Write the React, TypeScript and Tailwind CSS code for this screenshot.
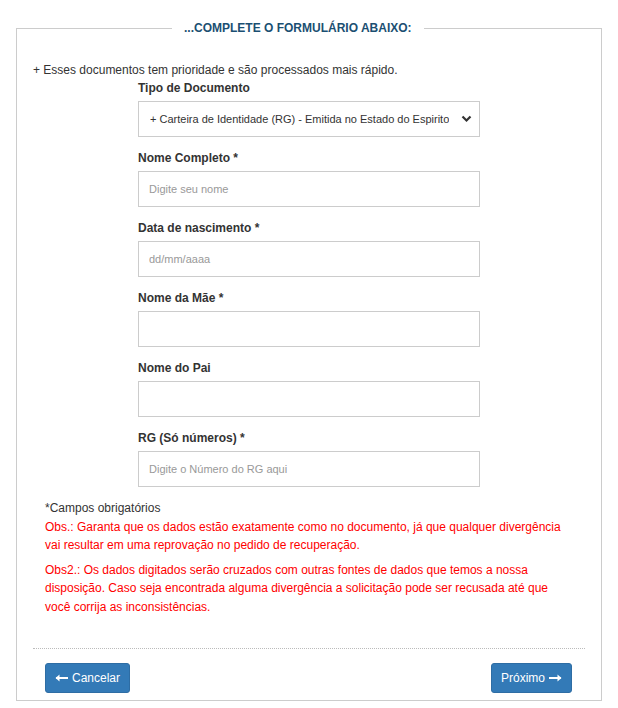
import React from 'react';

const font = { fontFamily: '"Liberation Sans", Arial, sans-serif' };

function Field({ label, children }: { label: string; children: React.ReactNode }) {
  return (
    <div className="mb-[12px]">
      <label className="block mb-[4px] text-[12px] leading-[18px] font-bold text-[#333]">{label}</label>
      {children}
    </div>
  );
}

function TextInput({ placeholder }: { placeholder?: string }) {
  return (
    <input
      type="text"
      placeholder={placeholder}
      className="block w-full h-[36px] px-[10px] border border-[#ccc] bg-white text-[11px] text-[#555] placeholder:text-[#999] outline-none"
      style={font}
    />
  );
}

export default function App() {
  return (
    <div className="bg-white w-[618px] h-[708px] pt-[18px]" style={font}>
      <fieldset className="mx-[16px] border border-[#ccc] px-[16px] pb-[8px] h-[683px]">
        <legend className="ml-[139px] px-[12px] text-[12px] font-bold text-[#1b4f72] leading-[20px]">
          ...COMPLETE O FORMULÁRIO ABAIXO:
        </legend>

        <p className="mt-[23px] text-[12px] leading-[18px] text-[#333]">
          + Esses documentos tem prioridade e são processados mais rápido.
        </p>

        <div className="w-[342px] mx-auto">
          <Field label="Tipo de Documento">
            <div className="relative">
              <select
                className="block w-full h-[36px] pl-[11px] pr-[30px] border border-[#ccc] bg-white text-[11px] text-[#333] appearance-none outline-none"
                style={font}
                defaultValue="rg"
              >
                <option value="rg">+ Carteira de Identidade (RG) - Emitida no Estado do Espirito Santo</option>
              </select>
              <svg className="absolute right-[8px] top-[14px] pointer-events-none" width="11" height="8" viewBox="0 0 11 8">
                <path d="M1.5 1.5 L5.5 5.5 L9.5 1.5" fill="none" stroke="#333" strokeWidth="2.2" />
              </svg>
            </div>
          </Field>
          <Field label="Nome Completo *">
            <TextInput placeholder="Digite seu nome" />
          </Field>
          <Field label="Data de nascimento *">
            <TextInput placeholder="dd/mm/aaaa" />
          </Field>
          <Field label="Nome da Mãe *">
            <TextInput />
          </Field>
          <Field label="Nome do Pai">
            <TextInput />
          </Field>
          <Field label="RG (Só números) *">
            <TextInput placeholder="Digite o Número do RG aqui" />
          </Field>
        </div>

        <div className="px-[12px] mt-[9px] text-[12px] leading-[18.5px]">
          <p className="text-[#333]">*Campos obrigatórios</p>
          <p className="text-[#f00]">
            Obs.: Garanta que os dados estão exatamente como no documento, já que qualquer divergência vai resultar em uma reprovação no pedido de recuperação.
          </p>
          <p className="text-[#f00] mt-[6px]">
            Obs2.: Os dados digitados serão cruzados com outras fontes de dados que temos a nossa disposição. Caso seja encontrada alguma divergência a solicitação pode ser recusada até que você corrija as inconsistências.
          </p>
        </div>

        <div className="mt-[32px] border-t border-dotted border-[#bbb] pt-[14px] px-[12px] pr-[13px] flex justify-between">
          <button className="h-[30px] px-[9px] flex items-center gap-[3px] bg-[#337ab7] border border-[#2e6da4] rounded-[3px] text-white text-[12px]">
            <svg width="14" height="8" viewBox="0 0 14 8">
              <path d="M1 4 H13" stroke="#fff" strokeWidth="2" />
              <path d="M0.5 4 L4.5 0.5 V7.5 Z" fill="#fff" />
            </svg>
            Cancelar
          </button>
          <button className="h-[30px] px-[9px] flex items-center gap-[3px] bg-[#337ab7] border border-[#2e6da4] rounded-[3px] text-white text-[12px]">
            Próximo
            <svg width="14" height="8" viewBox="0 0 14 8">
              <path d="M1 4 H13" stroke="#fff" strokeWidth="2" />
              <path d="M13.5 4 L9.5 0.5 V7.5 Z" fill="#fff" />
            </svg>
          </button>
        </div>
      </fieldset>
    </div>
  );
}
